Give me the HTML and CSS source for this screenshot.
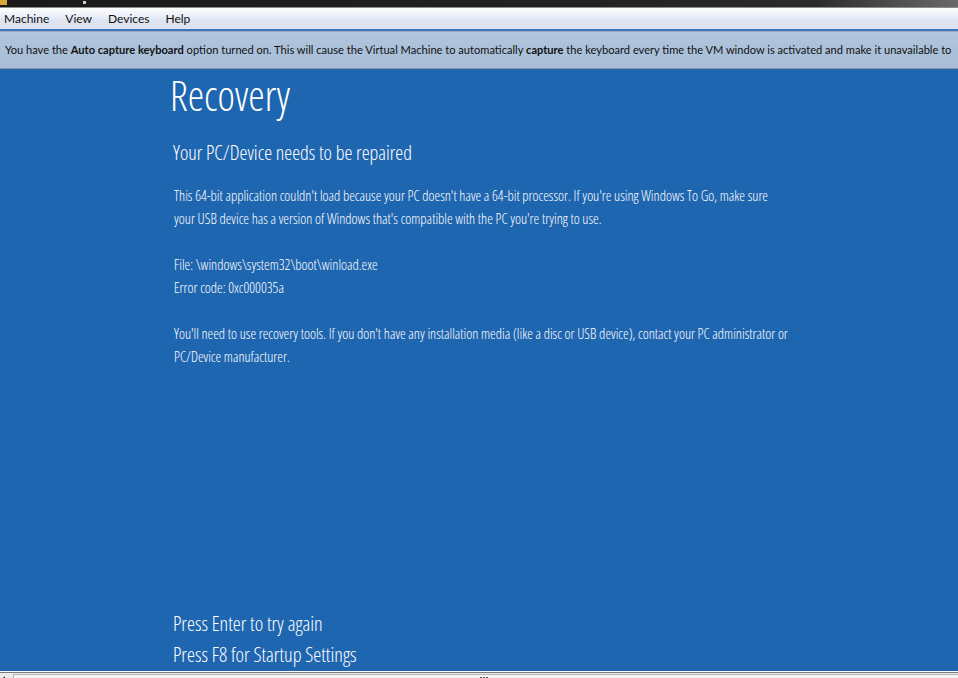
FILE: index.html
```html
<!DOCTYPE html>
<html lang="en">
<head>
<meta charset="utf-8">
<title>Recovery</title>
<link rel="stylesheet" href="styles.css">
</head>
<body>
<div class="window">
  <div class="titlebar"><span class="app-icon"></span><span class="title-mark"></span></div>
  <nav class="menubar">
    <span class="menu-item">Machine</span>
    <span class="menu-item">View</span>
    <span class="menu-item">Devices</span>
    <span class="menu-item">Help</span>
  </nav>
  <div class="notice">You have the <b>Auto capture keyboard</b> option turned on. This will cause the Virtual Machine to automatically <b>capture</b> the keyboard every time the VM window is activated and make it unavailable to</div>
  <main class="screen">
    <h1 class="title">Recovery</h1>
    <h2 class="subtitle">Your PC/Device needs to be repaired</h2>
    <p class="para">This 64-bit application couldn't load because your PC doesn't have a 64-bit processor. If you're using Windows To Go, make sure<br>your USB device has a version of Windows that's compatible with the PC you're trying to use.</p>
    <p class="para">File: \windows\system32\boot\winload.exe<br>Error code: 0xc000035a</p>
    <p class="para">You'll need to use recovery tools. If you don't have any installation media (like a disc or USB device), contact your PC administrator or<br>PC/Device manufacturer.</p>
    <div class="actions">
      <div class="action">Press Enter to try again</div>
      <div class="action">Press F8 for Startup Settings</div>
    </div>
  </main>
  <div class="statusbar">
    <span class="arrow"></span>
    <span class="track"><span class="grip"><i></i><i></i><i></i></span></span>
  </div>
</div>
</body>
</html>
```
FILE: styles.css
```css
html, body {
  margin: 0;
  padding: 0;
  width: 958px;
  height: 678px;
  overflow: hidden;
  background: #1f66b0;
}

.window {
  display: flex;
  flex-direction: column;
  width: 958px;
  height: 678px;
}

.titlebar {
  height: 7px;
  flex: none;
  background: linear-gradient(90deg, #1a1a1a 0%, #222 60%, #2b2b2b 85%, #6a6a6a 100%);
  border-bottom: 1px solid #8c8c8c;
  display: flex;
  align-items: flex-start;
}

.app-icon {
  width: 7px;
  height: 5px;
  background: #d9a63a;
}

.title-mark {
  width: 3px;
  height: 3px;
  margin-left: 76px;
  margin-top: 1px;
  background: #cfcfcf;
}

.menubar {
  flex: none;
  height: 20px;
  display: flex;
  gap: 16px;
  align-items: center;
  padding: 0 0 0 4px;
  border-top: 1px solid #ffffff;
  border-bottom: 2px solid #3b76bd;
  background: linear-gradient(180deg, #fbfcfe 0%, #eef1f9 30%, #dfe4f2 55%, #dde3f1 100%);
  font-family: Lato, "Open Sans", sans-serif;
  font-size: 12px;
  color: #111;
}

.menu-item {
  line-height: 20px;
}

.notice {
  flex: none;
  height: 36px;
  line-height: 36px;
  padding-left: 5px;
  white-space: nowrap;
  overflow: hidden;
  border-top: 1px solid #9aa9bc;
  border-bottom: 1px solid #8796aa;
  background: linear-gradient(180deg, #b3c7de 0%, #abc0d9 50%, #a9bdd6 100%);
  font-family: Lato, "Open Sans", sans-serif;
  font-size: 11.1px;
  color: #111;
}

.notice b {
  font-weight: 700;
}

.screen {
  flex: 1;
  display: flex;
  flex-direction: column;
  padding: 2px 0 1px 170px;
  background: #1f66b0;
  color: #ffffff;
  font-family: "Open Sans", sans-serif;
  font-stretch: 75%;
}

.title {
  margin: 0;
  font-size: 41.5px;
  line-height: 48px;
  font-weight: 300;
}

.subtitle {
  margin: 22px 0 0 3px;
  font-size: 20px;
  line-height: 24px;
  font-weight: 340;
}

.para {
  margin: 19px 0 0 4px;
  font-size: 14.3px;
  line-height: 23px;
  font-weight: 340;
}

.para + .para {
  margin-top: 23px;
}

.actions {
  margin-top: auto;
  margin-left: 3px;
}

.action {
  font-size: 20.2px;
  line-height: 31px;
  font-weight: 340;
}

.statusbar {
  flex: none;
  height: 5px;
  display: flex;
  align-items: flex-start;
  border-top: 1px solid #ffffff;
  box-shadow: inset 0 1px 0 #7a7a7a;
  padding-top: 1px;
  background: #ececec;
  overflow: hidden;
}

.arrow {
  width: 0;
  height: 0;
  margin: 3px 8px 0 2px;
  border-top: 3px solid transparent;
  border-bottom: 3px solid transparent;
  border-right: 3px solid #333;
}

.track {
  flex: 1;
  height: 8px;
  margin-top: 1px;
  border: 1px solid #b4b4b4;
  border-bottom: 0;
  border-right: 0;
  background: #f4f4f4;
}

.grip {
  display: flex;
  gap: 1px;
  margin-left: 466px;
  margin-top: 2px;
}

.grip i {
  width: 2px;
  height: 3px;
  background: #555;
}
```
